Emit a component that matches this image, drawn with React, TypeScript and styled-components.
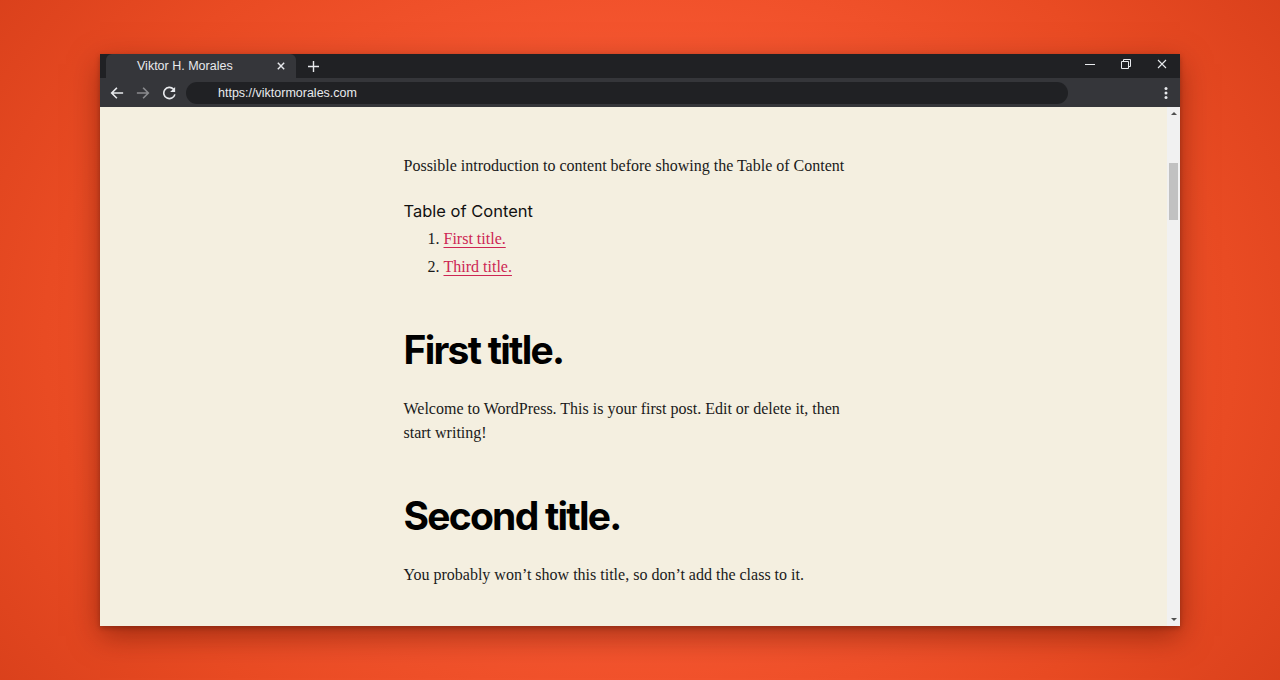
import React from "react";
import styled, { createGlobalStyle } from "styled-components";

const Global = createGlobalStyle`
  html, body { margin: 0; padding: 0; }
  body {
    width: 1280px;
    height: 680px;
    overflow: hidden;
    font-family: "Liberation Sans", Arial, sans-serif;
  }
`;

const Stage = styled.div`
  width: 1280px;
  height: 680px;
  box-sizing: border-box;
  padding-top: 54px;
  display: flex;
  justify-content: center;
  align-items: flex-start;
  background: radial-gradient(ellipse 62% 90% at 50% 50%, #fb5a30 0%, #f65630 45%, #e94b23 75%, #d9401b 100%);
`;

const Window = styled.div`
  width: 1080px;
  height: 572px;
  display: flex;
  flex-direction: column;
  box-shadow: 0 10px 28px rgba(90, 15, 0, 0.5), 0 2px 5px rgba(0, 0, 0, 0.25);
`;

const TabBar = styled.div`
  height: 24px;
  background: #202124;
  display: flex;
  align-items: stretch;
  padding-left: 6px;
`;

const Tab = styled.div`
  width: 190px;
  background: #35363a;
  border-radius: 6px 6px 0 0;
  display: flex;
  align-items: center;
  padding-left: 31px;
  padding-right: 10px;
  box-sizing: border-box;
  color: #e8eaed;
  font-size: 12.5px;
`;

const TabTitle = styled.span`
  flex: 1;
  line-height: 1;
  margin-top: 1px;
`;

const IconBtn = styled.span<{ $w?: number; $dim?: boolean }>`
  width: ${(p) => p.$w ?? 16}px;
  display: flex;
  align-items: center;
  justify-content: center;
  color: ${(p) => (p.$dim ? "#8a8b8e" : "#e8eaed")};
`;

const NewTab = styled.span`
  display: flex;
  align-items: center;
  margin-left: 12px;
  color: #e8eaed;
`;

const Spacer = styled.div`
  flex: 1;
`;

const WinControls = styled.div`
  display: flex;
  align-items: flex-start;
  padding-top: 4px;
`;

const WinBtn = styled.span`
  width: 36px;
  height: 12px;
  display: flex;
  align-items: center;
  justify-content: center;
  color: #e8eaed;
`;

const Toolbar = styled.div`
  height: 29px;
  background: #35363a;
  display: flex;
  align-items: center;
  padding-left: 9px;
  padding-right: 10px;
  gap: 9px;
`;

const NavGroup = styled.div`
  display: flex;
  align-items: center;
  gap: 10px;
`;

const UrlBar = styled.div`
  width: 882px;
  height: 22px;
  border-radius: 11px;
  background: #202124;
  display: flex;
  align-items: center;
  padding-left: 32px;
  box-sizing: border-box;
  color: #e8eaed;
  font-size: 12.5px;
`;

const Viewport = styled.div`
  flex: 1;
  display: flex;
  background: #f4efe0;
  min-height: 0;
`;

const Page = styled.div`
  flex: 1;
  display: flex;
  justify-content: center;
  overflow: hidden;
`;

const Article = styled.article`
  width: 460px;
  padding-top: 47px;
  color: #1a1a1a;
  font-family: "Liberation Serif", "Times New Roman", serif;
  font-size: 16px;
`;

const Para = styled.p<{ $gap?: number }>`
  margin: ${(p) => p.$gap ?? 0}px 0 0;
  line-height: 24px;
`;

const TocHeading = styled.div`
  margin-top: 21px;
  font-family: Inter, "Liberation Sans", sans-serif;
  font-size: 16.5px;
  line-height: 24px;
  color: #111;
`;

const TocList = styled.ol`
  margin: 2px 0 0;
  padding-left: 40px;
  line-height: 28px;
`;

const TocLink = styled.a`
  color: #cd2653;
  text-decoration: underline;
  text-underline-offset: 3px;
`;

const Title = styled.h2<{ $gap: number }>`
  margin: ${(p) => p.$gap}px 0 0;
  font-family: Inter, "Liberation Sans", sans-serif;
  font-weight: 700;
  font-size: 39px;
  line-height: 48px;
  letter-spacing: -0.045em;
  color: #000;
`;

const Scrollbar = styled.div`
  width: 13px;
  background: #f1f1f1;
  display: flex;
  flex-direction: column;
  align-items: center;
`;

const Arrow = styled.div<{ $down?: boolean }>`
  height: 13px;
  width: 13px;
  display: flex;
  align-items: center;
  justify-content: center;
  &::after {
    content: "";
    border-left: 3px solid transparent;
    border-right: 3px solid transparent;
    ${(p) => (p.$down ? "border-top: 3px solid #505050;" : "border-bottom: 3px solid #505050;")}
  }
`;

const Thumb = styled.div`
  margin-top: 43px;
  width: 9px;
  height: 57px;
  background: #c1c1c1;
`;

const Track = styled.div`
  flex: 1;
`;

const ArrowLeft = ({ color = "currentColor" }: { color?: string }) => (
  <svg width="16" height="16" viewBox="0 0 24 24" fill="none" stroke={color} strokeWidth="2.4" strokeLinecap="square">
    <path d="M20 12H5M11 5l-7 7 7 7" />
  </svg>
);

const ArrowRight = ({ color = "currentColor" }: { color?: string }) => (
  <svg width="16" height="16" viewBox="0 0 24 24" fill="none" stroke={color} strokeWidth="2.4" strokeLinecap="square">
    <path d="M4 12h15M13 5l7 7-7 7" />
  </svg>
);

const Reload = () => (
  <svg width="15" height="15" viewBox="0 0 24 24" fill="none">
    <path d="M18.4 6.6A9 9 0 1 0 20.6 15" stroke="currentColor" strokeWidth="2.6" />
    <path d="M21 3v8h-8z" fill="currentColor" />
  </svg>
);

const CloseX = ({ size = 9, w = 1.6 }: { size?: number; w?: number }) => (
  <svg width={size} height={size} viewBox="0 0 10 10" fill="none" stroke="currentColor" strokeWidth={w}>
    <path d="M1 1l8 8M9 1l-8 8" />
  </svg>
);

const Plus = () => (
  <svg width="11" height="11" viewBox="0 0 11 11" fill="none" stroke="currentColor" strokeWidth="1.4">
    <path d="M5.5 0v11M0 5.5h11" />
  </svg>
);

const Minimize = () => (
  <svg width="10" height="10" viewBox="0 0 10 10" fill="none" stroke="currentColor" strokeWidth="1">
    <path d="M0 5.5h10" />
  </svg>
);

const Restore = () => (
  <svg width="10" height="10" viewBox="0 0 10 10" fill="none" stroke="currentColor" strokeWidth="1">
    <path d="M0.5 2.5h7v7h-7z" />
    <path d="M2.5 2.5V0.5h7v7h-2" />
  </svg>
);

const Kebab = () => (
  <svg width="4" height="14" viewBox="0 0 4 14" fill="currentColor">
    <circle cx="2" cy="2.5" r="1.5" />
    <circle cx="2" cy="7" r="1.5" />
    <circle cx="2" cy="11.5" r="1.5" />
  </svg>
);

export default function App() {
  return (
    <>
      <Global />
      <Stage>
        <Window>
          <TabBar>
            <Tab>
              <TabTitle>Viktor H. Morales</TabTitle>
              <IconBtn $w={10}>
                <CloseX size={8} w={1.8} />
              </IconBtn>
            </Tab>
            <NewTab>
              <Plus />
            </NewTab>
            <Spacer />
            <WinControls>
              <WinBtn>
                <Minimize />
              </WinBtn>
              <WinBtn>
                <Restore />
              </WinBtn>
              <WinBtn>
                <CloseX size={10} w={1.1} />
              </WinBtn>
            </WinControls>
          </TabBar>
          <Toolbar>
            <NavGroup>
              <IconBtn>
                <ArrowLeft />
              </IconBtn>
              <IconBtn $dim>
                <ArrowRight />
              </IconBtn>
              <IconBtn>
                <Reload />
              </IconBtn>
            </NavGroup>
            <UrlBar>https://viktormorales.com</UrlBar>
            <Spacer />
            <IconBtn $w={8}>
              <Kebab />
            </IconBtn>
          </Toolbar>
          <Viewport>
            <Page>
              <Article>
                <Para>Possible introduction to content before showing the Table of Content</Para>
                <TocHeading>Table of Content</TocHeading>
                <TocList>
                  <li>
                    <TocLink href="#first">First title.</TocLink>
                  </li>
                  <li>
                    <TocLink href="#third">Third title.</TocLink>
                  </li>
                </TocList>
                <Title $gap={45}>First title.</Title>
                <Para $gap={23}>
                  Welcome to WordPress. This is your first post. Edit or delete it, then start writing!
                </Para>
                <Title $gap={47}>Second title.</Title>
                <Para $gap={23}>You probably won’t show this title, so don’t add the class to it.</Para>
              </Article>
            </Page>
            <Scrollbar>
              <Arrow />
              <Thumb />
              <Track />
              <Arrow $down />
            </Scrollbar>
          </Viewport>
        </Window>
      </Stage>
    </>
  );
}
